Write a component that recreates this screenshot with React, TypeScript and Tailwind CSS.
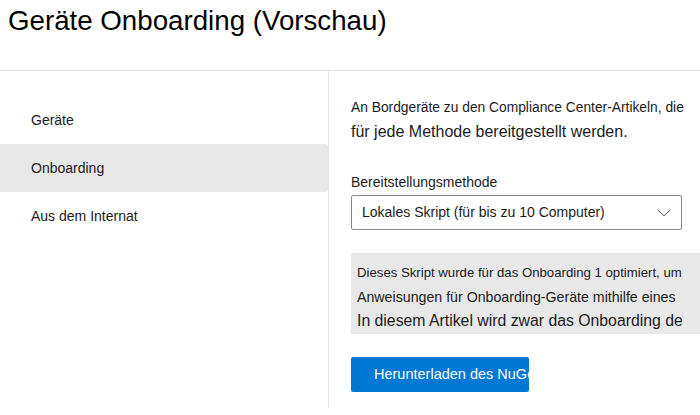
import React from 'react';

const navItems = ['Geräte', 'Onboarding', 'Aus dem Internat'];

export default function App() {
  const active = 'Onboarding';

  return (
    <div className="w-[700px] h-[415px] overflow-hidden bg-white text-[#1b1b1b] font-['Liberation_Sans',Arial,sans-serif]">
      {/* Header */}
      <div className="h-[71px] border-b border-[#e3e3e3] pl-2 pt-[4px]">
        <h1 className="text-[27.7px] leading-[34px] text-black">Geräte Onboarding (Vorschau)</h1>
      </div>

      <div className="flex h-[344px]">
        {/* Side nav */}
        <nav className="w-[329px] shrink-0 border-r border-[#e3e3e3] pt-[25px] h-[337px]">
          {navItems.map(item => (
            <div
              key={item}
              className={`h-12 flex items-center pl-[31px] text-[14px] rounded-r-[3px] ${
                item === active ? 'bg-[#e8e8e8]' : ''
              }`}
            >
              {item}
            </div>
          ))}
        </nav>

        {/* Content */}
        <div className="flex-1 pl-[22px] pt-[27px] min-w-0">
          <p className="text-[13.8px] leading-[20px]">An Bordgeräte zu den Compliance Center-Artikeln, die</p>
          <p className="text-[16px] leading-[22px] mt-[3px]">für jede Methode bereitgestellt werden.</p>

          <label className="block text-[14px] mt-[30px] leading-[18px]">Bereitstellungsmethode</label>
          <div className="mt-[4px] w-[331px] h-[35px] border border-[#8a8886] rounded-[2px] flex items-center justify-between pl-[10px] pr-[10px] text-[14px]">
            <span>Lokales Skript (für bis zu 10 Computer)</span>
            <svg width="14" height="8" viewBox="0 0 14 8" fill="none" stroke="#605e5c" strokeWidth="1">
              <path d="M1 1l6 6 6-6" />
            </svg>
          </div>

          {/* Info box */}
          <div className="mt-[23px] h-[81px] bg-[#e8e8e8] flex">
            <div className="w-[331px] overflow-hidden whitespace-nowrap pl-[6px] pt-[8px]">
              <div className="text-[13.2px] leading-[24px]">Dieses Skript wurde für das Onboarding 1 optimiert, um</div>
              <div className="text-[14.2px] leading-[24px]">Anweisungen für Onboarding-Geräte mithilfe eines</div>
              <div className="text-[15.8px] leading-[24px]">In diesem Artikel wird zwar das Onboarding der Geräte beschrieben</div>
            </div>
          </div>

          <button className="mt-[23px] w-[178px] h-[35px] bg-[#0078d4] rounded-[2px] text-white text-[14.5px] text-left pl-[23px] overflow-hidden whitespace-nowrap">
            Herunterladen des NuGet-Pakets
          </button>
        </div>
      </div>
    </div>
  );
}
